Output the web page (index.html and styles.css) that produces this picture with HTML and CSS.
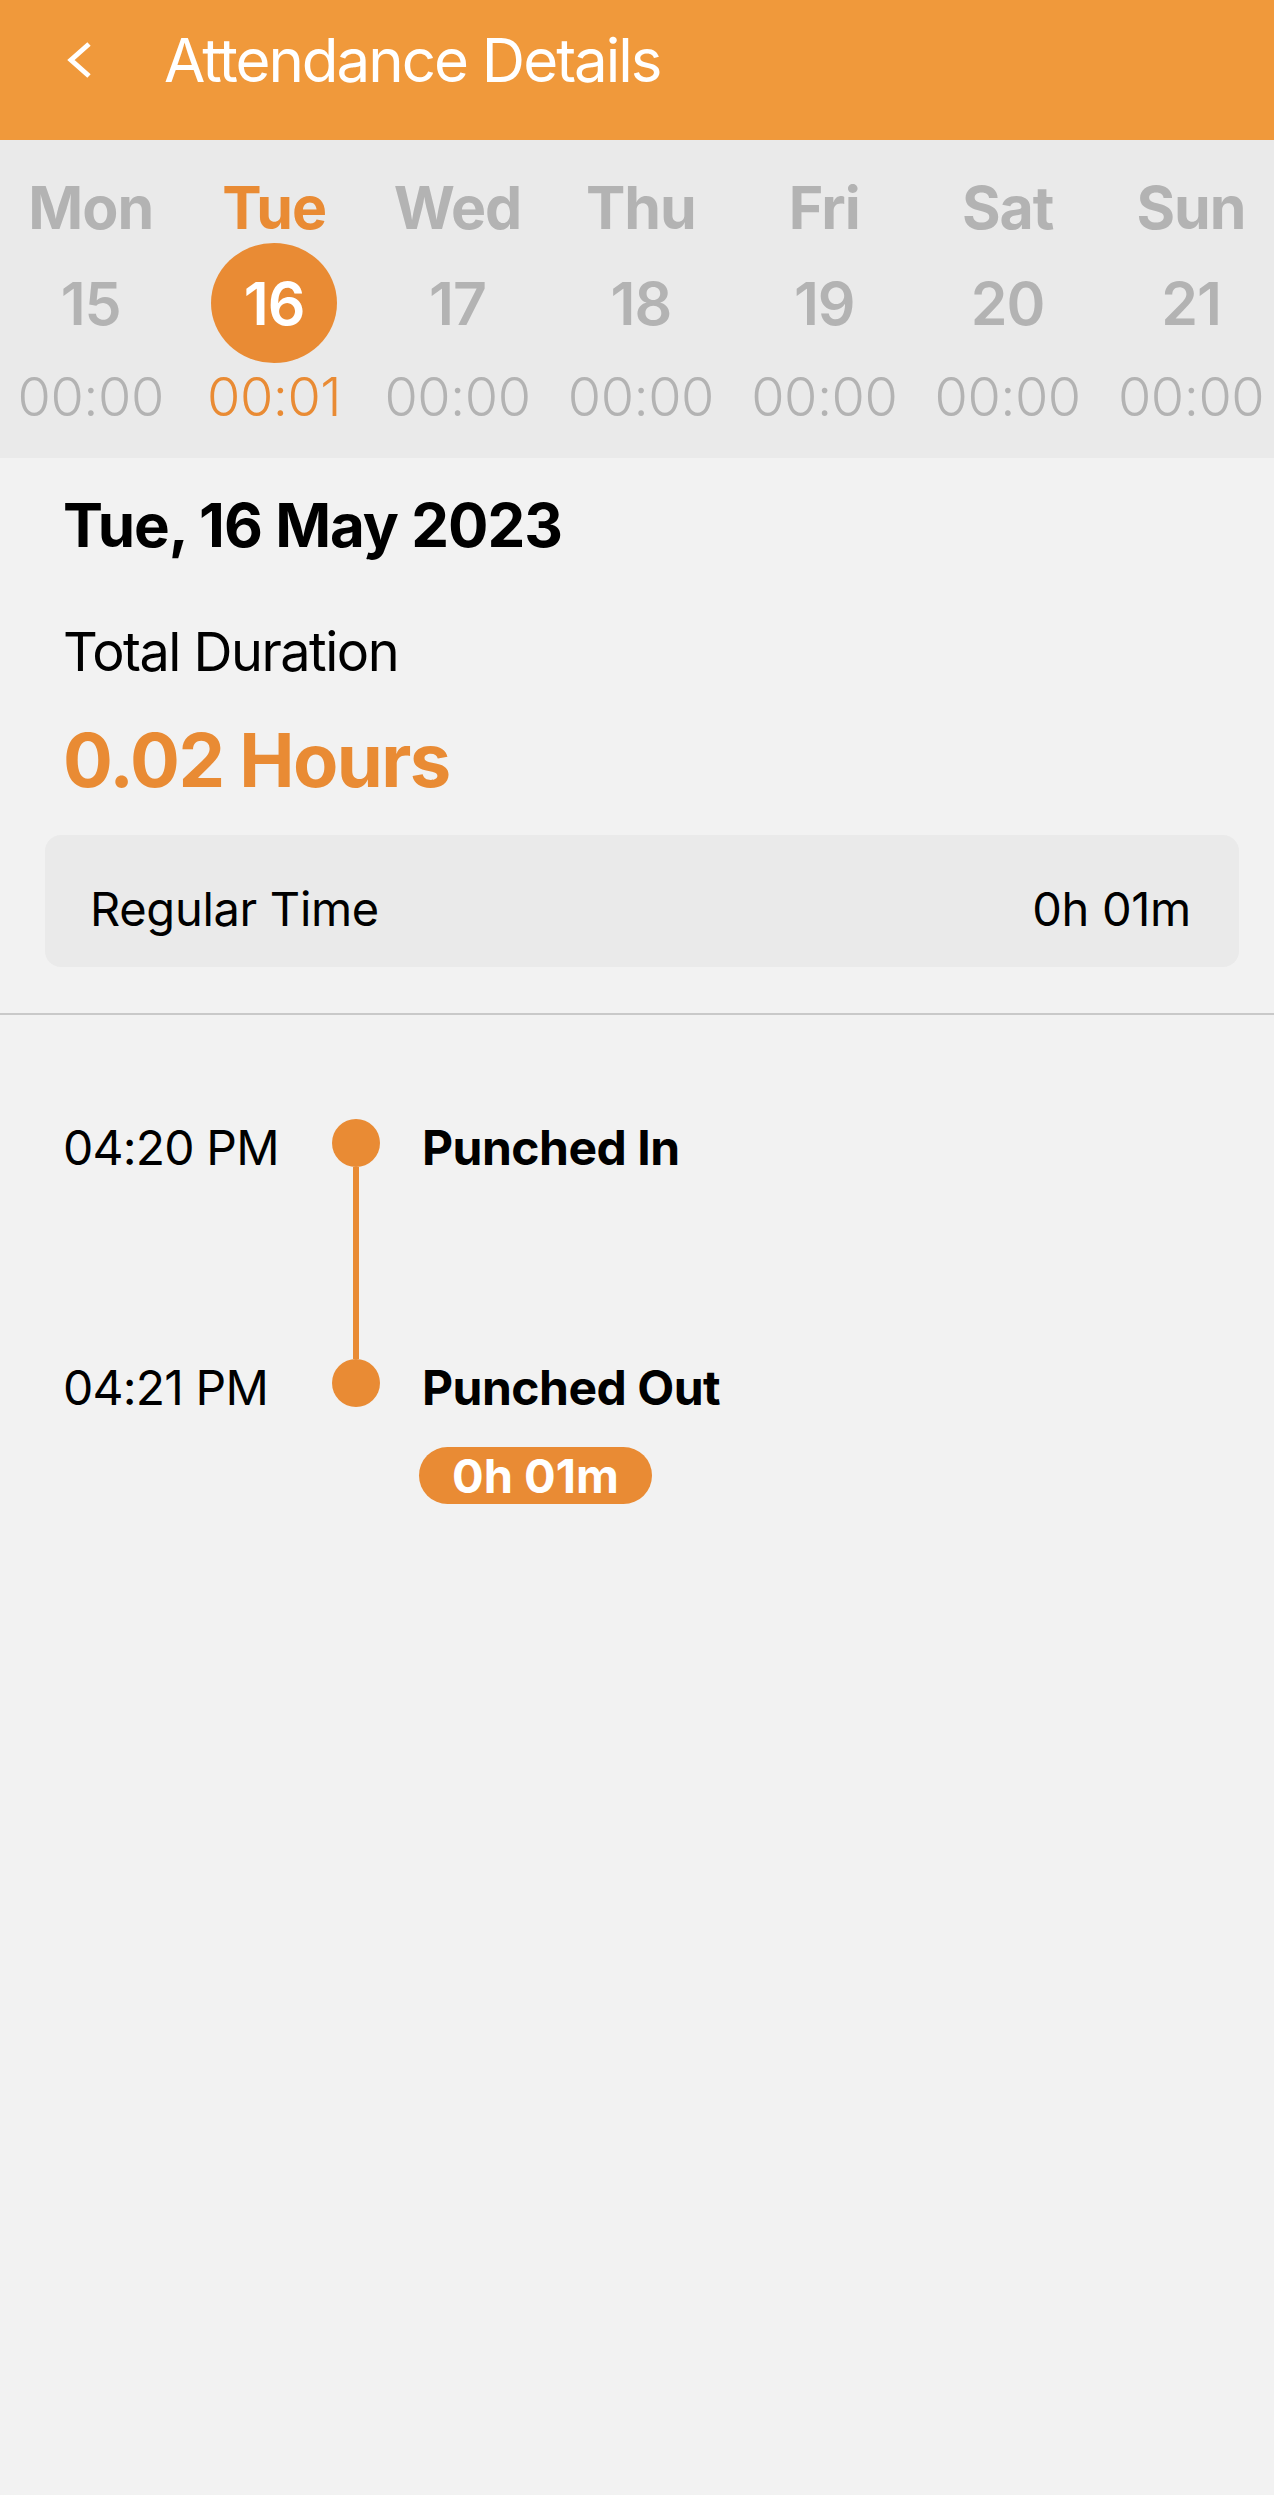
FILE: index.html
```
<!DOCTYPE html>
<html>
<head>
<meta charset="utf-8">
<link rel="stylesheet" href="styles.css">
</head>
<body>
<header class="topbar">
  <svg class="back" width="26" height="38" viewBox="0 0 26 38"><polyline points="22,3 4,19 22,35" fill="none" stroke="#fff" stroke-width="5"/></svg>
  <h1 class="title">Attendance Details</h1>
</header>
<section class="week">
  <div class="days">
    <div class="day"><div class="dname">Mon</div><div class="dnum"><span>15</span></div><div class="dtime">00:00</div></div>
    <div class="day active"><div class="dname">Tue</div><div class="dnum"><span>16</span></div><div class="dtime">00:01</div></div>
    <div class="day"><div class="dname">Wed</div><div class="dnum"><span>17</span></div><div class="dtime">00:00</div></div>
    <div class="day"><div class="dname">Thu</div><div class="dnum"><span>18</span></div><div class="dtime">00:00</div></div>
    <div class="day"><div class="dname">Fri</div><div class="dnum"><span>19</span></div><div class="dtime">00:00</div></div>
    <div class="day"><div class="dname">Sat</div><div class="dnum"><span>20</span></div><div class="dtime">00:00</div></div>
    <div class="day"><div class="dname">Sun</div><div class="dnum"><span>21</span></div><div class="dtime">00:00</div></div>
  </div>
</section>
<section class="summary">
  <h2 class="date">Tue, 16 May 2023</h2>
  <div class="label">Total Duration</div>
  <div class="total">0.02 Hours</div>
</section>
<div class="card">
  <span>Regular Time</span>
  <span>0h 01m</span>
</div>
<hr class="divider">
<section class="timeline">
  <div class="t-time">04:20 PM</div>
  <div class="t-dot"></div>
  <div class="t-label">Punched In</div>
  <div></div>
  <div class="t-line"></div>
  <div></div>
  <div class="t-time">04:21 PM</div>
  <div class="t-dot"></div>
  <div class="t-label">Punched Out</div>
  <div></div>
  <div></div>
  <div class="t-extra"><span class="badge">0h 01m</span></div>
</section>
</body>
</html>
```
FILE: styles.css
```
* { box-sizing: border-box; }
html, body { margin: 0; padding: 0; }
body {
  background: #F2F2F2;
  font-family: Inter, "Noto Sans", sans-serif;
  color: #000;
  width: 1274px;
  min-height: 2495px;
}
.topbar {
  height: 140px;
  background: #F0993B;
  display: flex;
  align-items: center;
  padding-bottom: 20px;
}
.back { margin-left: 67px; display: block; }
.title {
  margin: 0 0 0 71px;
  font-size: 60px;
  font-weight: 400;
  color: #fff;
  line-height: 72px;
  letter-spacing: -2px;
}
.week {
  background: #EAEAEA;
  height: 318px;
  padding-top: 33px;
  overflow: hidden;
}
.days {
  display: grid;
  grid-template-columns: repeat(7, 183.4px);
  margin-left: -1px;
}
.day { display: flex; flex-direction: column; align-items: center; color: #B3B3B3; }
.dname { font-size: 59px; font-weight: 700; line-height: 70px; letter-spacing: -1px; }
.dnum {
  width: 126px; height: 120px; border-radius: 50%;
  display: flex; align-items: center; justify-content: center;
}
.dnum span { font-size: 59px; font-weight: 600; line-height: 1; letter-spacing: -1px; }
.dtime { font-size: 54px; font-weight: 300; line-height: 60px; margin-top: 4px; letter-spacing: -0.5px; }
.day.active { color: #E98B34; }
.day.active .dnum { background: #E98B34; color: #fff; }
.summary { padding: 31px 63px 0; }
.date { margin: 0; font-size: 60px; font-weight: 700; line-height: 72px; letter-spacing: -1px; }
.label { margin-top: 59px; font-size: 54px; line-height: 64px; font-weight: 400; letter-spacing: -1.5px; }
.total { margin-top: 32px; font-size: 74px; line-height: 88px; font-weight: 700; color: #E98B34; letter-spacing: -1.6px; }
.card {
  margin: 31px 35px 0 45px;
  height: 132px;
  background: #EAEAEA;
  border-radius: 16px;
  display: flex;
  justify-content: space-between;
  align-items: center;
  padding: 14px 48px 0 45px;
  font-size: 47px;
  letter-spacing: -0.3px;
}
.divider { margin: 46px 0 0; border: 0; height: 2px; background: #C9C9C9; }
.timeline {
  display: grid;
  grid-template-columns: 269px 48px 1fr;
  grid-template-rows: 48px 192px 48px auto;
  padding: 104px 0 0 63px;
}
.t-time { font-size: 48px; line-height: 58px; font-weight: 400; letter-spacing: -0.8px; white-space: nowrap; }
.t-label { font-size: 48px; line-height: 58px; font-weight: 700; padding-left: 42px; letter-spacing: -0.5px; white-space: nowrap; }
.t-dot { width: 48px; height: 48px; border-radius: 50%; background: #E98B34; }
.t-line { width: 6px; height: 192px; background: #E98B34; margin: 0 auto; }
.t-extra { padding: 40px 0 0 39px; }
.badge {
  display: inline-block;
  height: 57px;
  line-height: 57px;
  padding: 0 33px;
  border-radius: 29px;
  background: #E98B34;
  color: #fff;
  font-size: 47px;
  font-weight: 700;
  letter-spacing: 0;
}
```
